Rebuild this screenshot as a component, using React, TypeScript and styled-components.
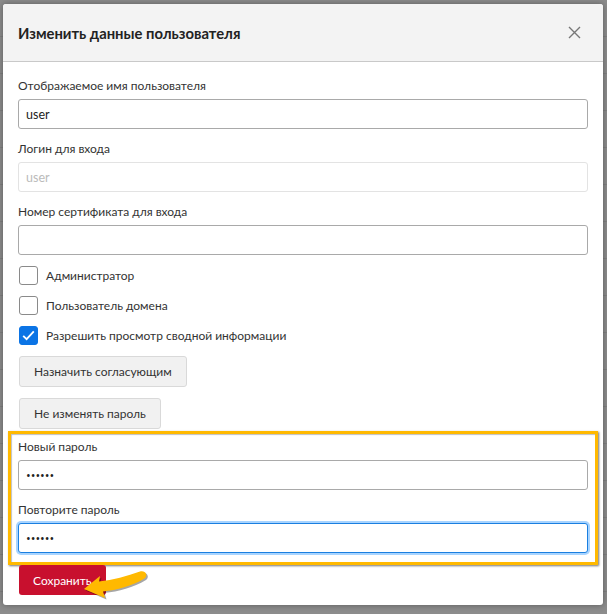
import styled, { createGlobalStyle } from "styled-components";

const GlobalStyle = createGlobalStyle`
  html, body {
    margin: 0;
    padding: 0;
    background: #8c8c8c;
  }
  body {
    font-family: Lato, "Noto Sans", Arial, sans-serif;
    color: #333;
  }
  * { box-sizing: border-box; }
`;

const Backdrop = styled.div`
  position: relative;
  width: 607px;
  height: 614px;
  overflow: hidden;
  padding: 4px 0 0 3px;
  background: repeating-linear-gradient(
    to bottom,
    #8c8c8c 0px,
    #8c8c8c 36px,
    #808080 36px,
    #808080 37px
  );
`;

const Modal = styled.div`
  width: 600px;
  background: #fff;
  border-radius: 3px;
  box-shadow: 0 0 6px rgba(0, 0, 0, 0.35);
`;

const Header = styled.div`
  display: flex;
  align-items: center;
  justify-content: space-between;
  height: 58px;
  padding: 0 22px 0 15px;
  background: #f3f3f3;
  border-bottom: 1px solid #c9c9c9;
  border-radius: 3px 3px 0 0;
`;

const Title = styled.h1`
  margin: 0;
  font-size: 14.8px;
  font-weight: 700;
  color: #222;
`;

const Close = styled.button`
  display: flex;
  padding: 0;
  border: 0;
  background: none;
  color: #777;
`;

const Body = styled.div`
  display: flex;
  flex-direction: column;
  padding: 15px 15px 10px 15px;
`;

const Label = styled.label`
  display: block;
  font-size: 12px;
  line-height: 18px;
  color: #333;
  margin-bottom: 4px;
`;

const Field = styled.div`
  margin-bottom: 11px;
`;

const Input = styled.input<{ $focused?: boolean }>`
  display: block;
  width: 100%;
  height: 30px;
  padding: 0 7px;
  font-family: inherit;
  font-size: 12.5px;
  color: #222;
  background: #fff;
  border: 1px solid ${(p) => (p.$focused ? "#1a7fe0" : "#a9a9a9")};
  border-radius: 3px;
  outline: none;
  box-shadow: ${(p) => (p.$focused ? "0 0 0 2px #a8d4ff" : "none")};
  caret-color: #000;

  &:disabled {
    border-color: #e3e3e3;
    color: #bbb;
  }

  &[type="password"] {
    font-family: "Open Sans", sans-serif;
    font-size: 12.5px;
  }
`;

const CheckRow = styled.label`
  display: flex;
  align-items: center;
  gap: 8px;
  height: 19px;
  margin: 0 0 11px 1px;
  font-size: 12px;
  color: #333;
`;

const Box = styled.span<{ $checked?: boolean }>`
  display: flex;
  align-items: center;
  justify-content: center;
  width: 19px;
  height: 19px;
  border-radius: 3px;
  border: 1px solid ${(p) => (p.$checked ? "#0b74e5" : "#8a8a8a")};
  background: ${(p) => (p.$checked ? "#0b74e5" : "#fff")};
`;

const Button = styled.button`
  align-self: flex-start;
  height: 31px;
  margin: 0 0 11px 1px;
  padding: 0 14px;
  font-family: inherit;
  font-size: 12px;
  color: #333;
  background: #f1f1f1;
  border: 1px solid #d9d9d9;
  border-radius: 3px;
`;

const Highlight = styled.div`
  margin: -9px -10px 0 -10px;
  padding: 4px 7px 9px 7px;
  border: 3px solid #ffb900;
  box-shadow: 1px 1px 2px rgba(0, 0, 0, 0.55), inset 1px 1px 1px rgba(0, 0, 0, 0.25);

  ${Field}:last-child {
    margin-bottom: 0;
  }
`;

const Footer = styled.div`
  position: relative;
  display: flex;
  margin-left: 1px;
`;

const SaveButton = styled.button`
  height: 30px;
  padding: 0 14px;
  font-family: inherit;
  font-size: 12px;
  color: #fff;
  background: #c8102e;
  border: 0;
  border-radius: 3px;
`;

const Arrow = styled.svg`
  position: absolute;
  left: 63px;
  top: 5px;
`;

const arrowPath =
  "M2 19 L18 6 L17 11.5 C31 10 45 6 58 1.5 C63.5 0 66.5 5.5 62.5 8.5 C50 16 35 20 21 21.5 L23 28 Z";

const CheckIcon = () => (
  <svg width="13" height="11" viewBox="0 0 13 11">
    <path d="M1.2 5.8 L4.6 9.2 L11.8 1.4" fill="none" stroke="#fff" strokeWidth="1.8" />
  </svg>
);

const Checkbox = ({ label, checked }: { label: string; checked?: boolean }) => (
  <CheckRow>
    <Box $checked={checked}>{checked && <CheckIcon />}</Box>
    {label}
  </CheckRow>
);

export default function App() {
  return (
    <>
      <GlobalStyle />
      <Backdrop>
        <Modal>
          <Header>
            <Title>Изменить данные пользователя</Title>
            <Close>
              <svg width="13" height="13" viewBox="0 0 13 13">
                <path d="M1 1 L12 12 M12 1 L1 12" stroke="#777" strokeWidth="1.4" />
              </svg>
            </Close>
          </Header>
          <Body>
            <Field>
              <Label>Отображаемое имя пользователя</Label>
              <Input defaultValue="user" />
            </Field>
            <Field>
              <Label>Логин для входа</Label>
              <Input defaultValue="user" disabled />
            </Field>
            <Field>
              <Label>Номер сертификата для входа</Label>
              <Input />
            </Field>
            <Checkbox label="Администратор" />
            <Checkbox label="Пользователь домена" />
            <Checkbox label="Разрешить просмотр сводной информации" checked />
            <Button>Назначить согласующим</Button>
            <Button>Не изменять пароль</Button>
            <Highlight>
              <Field>
                <Label>Новый пароль</Label>
                <Input type="password" defaultValue="123456" />
              </Field>
              <Field>
                <Label>Повторите пароль</Label>
                <Input type="password" defaultValue="123456" $focused autoFocus />
              </Field>
            </Highlight>
            <Footer>
              <SaveButton>Сохранить</SaveButton>
              <Arrow width="72" height="30" viewBox="0 0 72 30">
                <path d={arrowPath} fill="rgba(0,0,0,0.35)" transform="translate(1.5 1.5)" />
                <path d={arrowPath} fill="#ffb900" />
              </Arrow>
            </Footer>
          </Body>
        </Modal>
      </Backdrop>
    </>
  );
}
